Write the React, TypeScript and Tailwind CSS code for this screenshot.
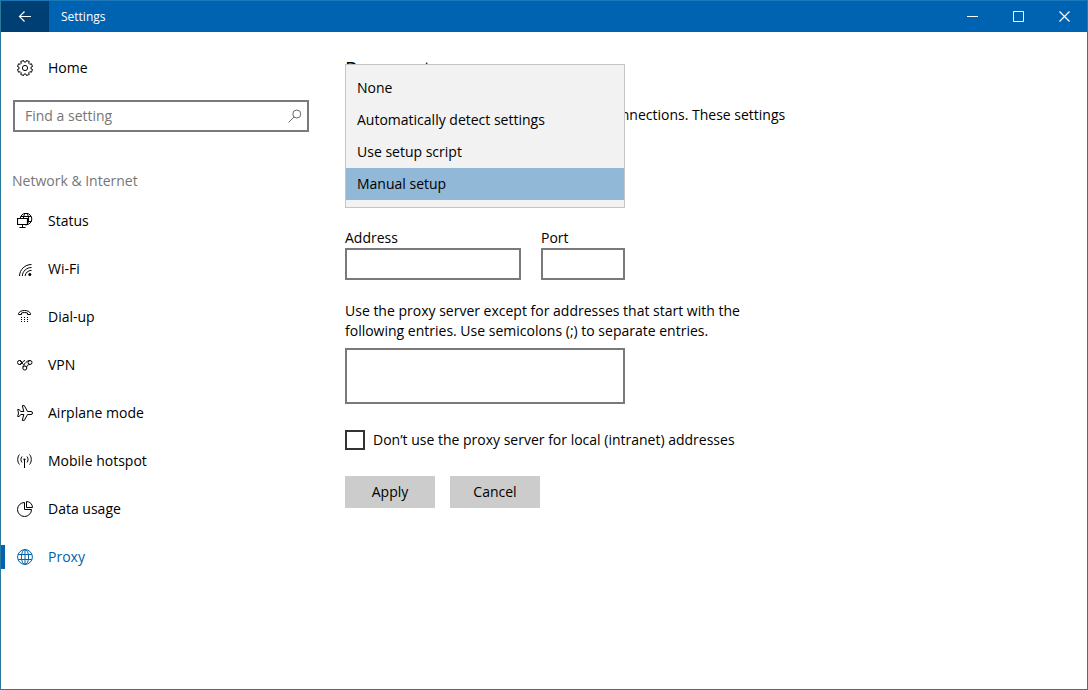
import { useState, type ReactNode } from 'react';

interface NavItem {
  id: string;
  label: string;
  icon: ReactNode;
}

const Icon = ({ children, size = 16 }: { children: ReactNode; size?: number }) => (
  <svg
    width={size}
    height={size}
    viewBox={`0 0 ${size} ${size}`}
    fill="none"
    stroke="currentColor"
    strokeWidth={1}
    className="shrink-0"
    aria-hidden="true"
  >
    {children}
  </svg>
);

// Eight-toothed outline around (8, 8)
const gearPath = () => {
  const points: string[] = [];
  for (let i = 0; i < 8; i++) {
    const mid = ((i + 0.5) * Math.PI) / 4;
    const corners = [
      [-0.24, 6.1],
      [-0.2, 7.7],
      [0.2, 7.7],
      [0.24, 6.1],
    ];
    corners.forEach(([offset, r]) => {
      points.push(`${(8 + r * Math.cos(mid + offset)).toFixed(2)} ${(8 + r * Math.sin(mid + offset)).toFixed(2)}`);
    });
  }
  return `M${points.join('L')}Z`;
};

const GearIcon = () => (
  <Icon>
    <path d={gearPath()} strokeLinejoin="round" />
    <circle cx="8" cy="8" r="2.6" />
  </Icon>
);

const navItems: NavItem[] = [
  {
    id: 'status',
    label: 'Status',
    icon: (
      <Icon>
        <circle cx="9" cy="6" r="5.8" />
        <ellipse cx="9" cy="6" rx="2.6" ry="5.8" />
        <path d="M4 3.5h10M11 8.5h3.4" />
        <path d="M.5 5.5h10v6H.5z" fill="white" strokeWidth={1.2} />
        <path d="M5.5 11.5V14M2.5 14.5h6" />
      </Icon>
    ),
  },
  {
    id: 'wifi',
    label: 'Wi-Fi',
    icon: (
      <Icon>
        <path d="M2.5 15C2.7 8.5 8 3.5 14.5 3.5M5.3 15c.3-4.800 4.300-8.500 9.200-8.500M8.100 15c.3-3.200 3-5.600 6.400-5.600" />
        <circle cx="12.8" cy="13.5" r="1.5" fill="currentColor" stroke="none" />
      </Icon>
    ),
  },
  {
    id: 'dialup',
    label: 'Dial-up',
    icon: (
      <Icon>
        <path d="M1.5 5.5v-1C2.500 2.500 4.500 1.500 7.500 1.500s5 1 6 3v1h-3v-1.500c-1.500-.6-4.500-.6-6 0v1.500z" />
        <path d="M4 8.500h1m2 0h1m2 0h1M4 10.500h1m2 0h1m2 0h1M4 12.500h1m2 0h1m2 0h1" />
      </Icon>
    ),
  },
  {
    id: 'vpn',
    label: 'VPN',
    icon: (
      <Icon>
        <circle cx="2.5" cy="5.5" r="2" />
        <circle cx="13" cy="5.5" r="2" />
        <circle cx="7.8" cy="11" r="2" />
        <path d="M2.5 3.5C5 3.5 5 7.5 6.5 7.5S9 3.5 13 3.5M2.5 7.5C5.5 7.5 5.5 3.5 8 3.5M6 10.200C5.600 8.800 7 8.500 8 7.500M9.700 10.200c0-1.800 1.300-2.700 3.300-2.700" />
      </Icon>
    ),
  },
  {
    id: 'airplane',
    label: 'Airplane mode',
    icon: (
      <Icon>
        <path
          d="M10.5 6.5H14a1.5 1.5 0 0 1 0 3h-3.5L7.300 15.400h-2L6.800 9.500H3.700l-1.500 2H.7L1.500 8 .7 4.500h1.500l1.500 2h3.100L5.300.6h2z"
          strokeLinejoin="round"
        />
      </Icon>
    ),
  },
  {
    id: 'hotspot',
    label: 'Mobile hotspot',
    icon: (
      <Icon>
        <circle cx="7.5" cy="6.5" r="1.1" fill="currentColor" stroke="none" />
        <path d="M7.5 6.5V15M5 3.5c-1.400 1.700-1.400 4.300 0 6M10 3.5c1.400 1.700 1.400 4.300 0 6M2.500 1.500c-2.400 2.800-2.400 7.200 0 10M12.500 1.500c2.400 2.800 2.400 7.200 0 10" />
      </Icon>
    ),
  },
  {
    id: 'data',
    label: 'Data usage',
    icon: (
      <Icon>
        <path d="M7.5 1.5a7 7 0 1 0 7 7h-7z" />
        <path d="M9.5.5v6h6a6 6 0 0 0-6-6z" />
      </Icon>
    ),
  },
  {
    id: 'proxy',
    label: 'Proxy',
    icon: (
      <Icon>
        <circle cx="8" cy="8" r="7.4" />
        <ellipse cx="8" cy="8" rx="3.6" ry="7.4" />
        <path d="M8 .6v14.8M1.300 5.500h13.400M1.300 10.500h13.400" />
      </Icon>
    ),
  },
];

const proxyModes = ['None', 'Automatically detect settings', 'Use setup script', 'Manual setup'];

function TitleBar() {
  return (
    <header className="flex h-8 items-stretch border-t border-[#1a78b8] bg-[#0063b1] text-white">
      <button type="button" aria-label="Back" className="flex w-12 items-center justify-center bg-[#003f74]">
        <Icon>
          <path d="M14 7.5H2.5M7.5 2.5l-5 5 5 5" strokeWidth={1.2} />
        </Icon>
      </button>
      <h1 className="flex flex-1 items-center pl-3 text-xs">Settings</h1>
      <div className="flex">
        <button type="button" aria-label="Minimize" className="flex w-[46px] items-center justify-center">
          <Icon size={11}>
            <path d="M0 5.5h11" />
          </Icon>
        </button>
        <button type="button" aria-label="Maximize" className="flex w-[46px] items-center justify-center">
          <Icon size={11}>
            <path d="M.5.5h10v10H.5z" />
          </Icon>
        </button>
        <button type="button" aria-label="Close" className="flex w-[46px] items-center justify-center">
          <Icon size={11}>
            <path d="M.5.5l10 10M10.5.5l-10 10" strokeWidth={1.2} />
          </Icon>
        </button>
      </div>
    </header>
  );
}

function Sidebar() {
  const [active, setActive] = useState('proxy');

  return (
    <aside className="w-80 shrink-0 pt-3">
      <a href="#home" className="flex h-12 items-center gap-[15px] pl-4">
        <GearIcon />
        Home
      </a>

      <div className="mt-2 mr-3 ml-3 flex h-8 items-center border-2 border-[#7a7a7a] pr-1 pl-2.5">
        <input
          type="search"
          aria-label="Find a setting"
          placeholder="Find a setting"
          className="min-w-0 flex-1 outline-none placeholder:text-[#767676]"
        />
        <span className="text-[#6a6a6a]">
          <Icon>
            <circle cx="9.8" cy="6" r="4" />
            <path d="M7 9l-5.5 5.5" />
          </Icon>
        </span>
      </div>

      <h2 className="mt-[39px] pl-[11px] text-[#767676]">Network &amp; Internet</h2>

      <nav className="mt-1.5">
        {navItems.map((item) => (
          <a
            key={item.id}
            href={`#${item.id}`}
            onClick={() => setActive(item.id)}
            aria-current={active === item.id ? 'page' : undefined}
            className={`flex h-12 items-center ${active === item.id ? 'text-[#0063a6]' : ''}`}
          >
            <span className={`mr-3 h-6 w-1 ${active === item.id ? 'bg-[#0063b1]' : ''}`} />
            {item.icon}
            <span className="ml-[15px]">{item.label}</span>
          </a>
        ))}
      </nav>
    </aside>
  );
}

function ProxyModePicker() {
  const [mode, setMode] = useState('Manual setup');

  return (
    <div className="relative mt-[23px] h-8 w-[280px]">
      <div
        role="listbox"
        aria-label="Proxy setup"
        className="absolute inset-x-0 -bottom-2 z-10 border border-[#c4c4c4] bg-[#f2f2f2] py-[7px]"
      >
        {proxyModes.map((option) => (
          <button
            key={option}
            type="button"
            role="option"
            aria-selected={mode === option}
            onClick={() => setMode(option)}
            className={`block h-8 w-full pl-[11px] text-left ${mode === option ? 'bg-[#91b8d6]' : ''}`}
          >
            {option}
          </button>
        ))}
      </div>
    </div>
  );
}

export default function App() {
  return (
    <div className="flex min-h-screen flex-col border-x border-b border-[#2a7a9c] bg-white font-['Open_Sans',sans-serif] text-sm leading-5 text-black">
      <TitleBar />
      <div className="flex flex-1">
        <Sidebar />

        <main className="min-w-0 flex-1 px-6 pt-6">
          <h2 className="text-xl leading-[26px]">Proxy setup</h2>
          <p className="mt-[23px] max-w-[460px]">
            Use a proxy server for Ethernet or Wi-Fi connections. These settings don&rsquo;t apply to VPN connections.
          </p>

          <ProxyModePicker />

          <form className="mt-7" onSubmit={(e) => e.preventDefault()}>
            <div className="flex gap-5">
              <div className="w-44">
                <label htmlFor="address" className="block">
                  Address
                </label>
                <input id="address" type="text" className="block h-8 w-full border-2 border-[#7a7a7a] px-2" />
              </div>
              <div className="w-[84px]">
                <label htmlFor="port" className="block">
                  Port
                </label>
                <input id="port" type="text" className="block h-8 w-full border-2 border-[#7a7a7a] px-2" />
              </div>
            </div>

            <label htmlFor="exceptions" className="mt-[21px] block max-w-[410px]">
              Use the proxy server except for addresses that start with the following entries. Use semicolons (;) to
              separate entries.
            </label>
            <textarea
              id="exceptions"
              className="mt-[7px] block h-14 w-[280px] resize-none border-2 border-[#7a7a7a] px-2 py-1"
            />

            <label className="mt-[26px] flex items-center gap-2">
              <input
                type="checkbox"
                className="size-5 appearance-none border-2 border-[#333333] checked:bg-[#0063b1]"
              />
              Don&rsquo;t use the proxy server for local (intranet) addresses
            </label>

            <div className="mt-[26px] flex gap-[15px]">
              <button type="submit" className="h-8 w-[90px] bg-[#cccccc]">
                Apply
              </button>
              <button type="button" className="h-8 w-[90px] bg-[#cccccc]">
                Cancel
              </button>
            </div>
          </form>
        </main>
      </div>
    </div>
  );
}
